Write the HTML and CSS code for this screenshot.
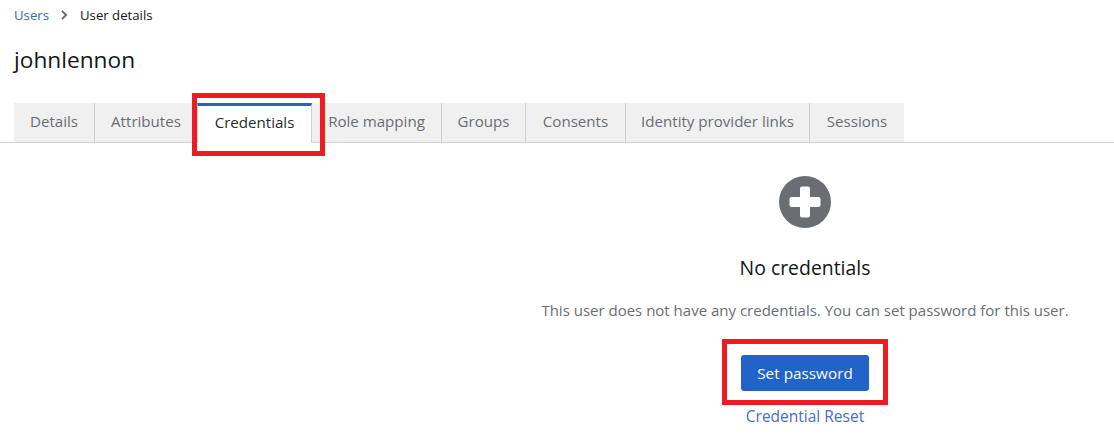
FILE: index.html
```html
<!DOCTYPE html>
<html lang="en">
<head>
<meta charset="utf-8">
<title>User details</title>
<link rel="stylesheet" href="styles.css">
</head>
<body>
<nav class="breadcrumb">
  <a class="crumb-link" href="#">Users</a>
  <svg class="crumb-sep" viewBox="0 0 8 12" width="8" height="10"><path d="M1.5 1 6.5 6l-5 5" fill="none" stroke="#6a6e73" stroke-width="2.4"/></svg>
  <span class="crumb-current">User details</span>
</nav>
<h1 class="title">johnlennon</h1>
<div class="tabs">
  <span class="tab tab-details">Details</span>
  <span class="tab tab-attributes">Attributes</span>
  <span class="tab tab-active">Credentials</span>
  <span class="tab tab-role">Role mapping</span>
  <span class="tab tab-groups">Groups</span>
  <span class="tab tab-consents">Consents</span>
  <span class="tab tab-idp">Identity provider links</span>
  <span class="tab tab-sessions">Sessions</span>
</div>
<section class="empty">
  <svg class="empty-icon" viewBox="0 0 52 52" width="52" height="52"><circle cx="26" cy="26" r="26" fill="#6a6e73"/><path d="M21 12.5a2 2 0 0 1 2-2h6a2 2 0 0 1 2 2V21h8.500a2 2 0 0 1 2 2v6a2 2 0 0 1-2 2H31v8.500a2 2 0 0 1-2 2h-6a2 2 0 0 1-2-2V31h-8.500a2 2 0 0 1-2-2v-6a2 2 0 0 1 2-2H21z" fill="#fff"/></svg>
  <h2 class="empty-title">No credentials</h2>
  <p class="empty-body">This user does not have any credentials. You can set password for this user.</p>
  <button class="primary">Set password</button>
  <a class="reset" href="#">Credential Reset</a>
</section>
<div class="mark mark-tab"></div>
<div class="mark mark-button"></div>
</body>
</html>
```
FILE: styles.css
```css
* { box-sizing: border-box; }
html, body { height: 100%; }
body {
  margin: 0;
  position: relative;
  overflow: hidden;
  background: #fff;
  color: #151515;
  font-family: "Open Sans", "Liberation Sans", sans-serif;
}
a { text-decoration: none; }
.breadcrumb {
  display: flex;
  align-items: center;
  height: 20px;
  padding: 9px 0 0 14px;
  font-size: 13.2px;
}
.crumb-link { color: #3c63c9; }
.crumb-sep { margin: 0 12px 0 11px; }
.crumb-current { color: #151515; }
.title {
  margin: 24px 0 0 14px;
  font-size: 22.7px;
  line-height: 32px;
  font-weight: 400;
  height: 32px;
}
.tabs {
  display: flex;
  margin-top: 27px;
  height: 40px;
  padding-left: 14px;
  border-bottom: 1px solid #d2d2d2;
}
.tab {
  display: flex;
  align-items: center;
  justify-content: center;
  height: 39px;
  padding-bottom: 3px;
  background: #f0f0f0;
  color: #6a6e73;
  font-size: 15.1px;
  border-right: 1px solid #d2d2d2;
  white-space: nowrap;
}
.tab-details { width: 81px; }
.tab-attributes { width: 102px; border-right: 0; }
.tab-active {
  width: 115px;
  height: 40px;
  padding-bottom: 6px;
  background: #fff;
  color: #2b2b2b;
  border-top: 3px solid #2463c7;
  border-left: 1px solid #d2d2d2;
  border-right: 1px solid #d2d2d2;
}
.tab-role { width: 130px; }
.tab-groups { width: 84px; }
.tab-consents { width: 100px; }
.tab-idp { width: 184px; }
.tab-sessions { width: 94px; border-right: 0; }
.empty {
  display: flex;
  flex-direction: column;
  align-items: center;
  margin-left: 496px;
  padding-top: 33px;
}
.empty-icon { display: block; }
.empty-title {
  margin: 27px 0 0;
  font-size: 19.4px;
  line-height: 26px;
  font-weight: 400;
}
.empty-body {
  margin: 17px 0 0;
  font-size: 15px;
  line-height: 24px;
  color: #6a6e73;
  white-space: nowrap;
}
.primary {
  margin-top: 33px;
  width: 128px;
  height: 36px;
  border: 0;
  border-radius: 3px;
  background: #2163c9;
  color: #fff;
  font: inherit;
  font-size: 15.3px;
}
.reset {
  margin-top: 14px;
  font-size: 15.5px;
  line-height: 22px;
  color: #4a6cc4;
}
.mark {
  position: absolute;
  border: 5px solid #ed1c24;
}
.mark-tab { left: 192px; top: 93px; width: 133px; height: 63px; }
.mark-button { left: 722px; top: 339px; width: 166px; height: 66px; }
```
